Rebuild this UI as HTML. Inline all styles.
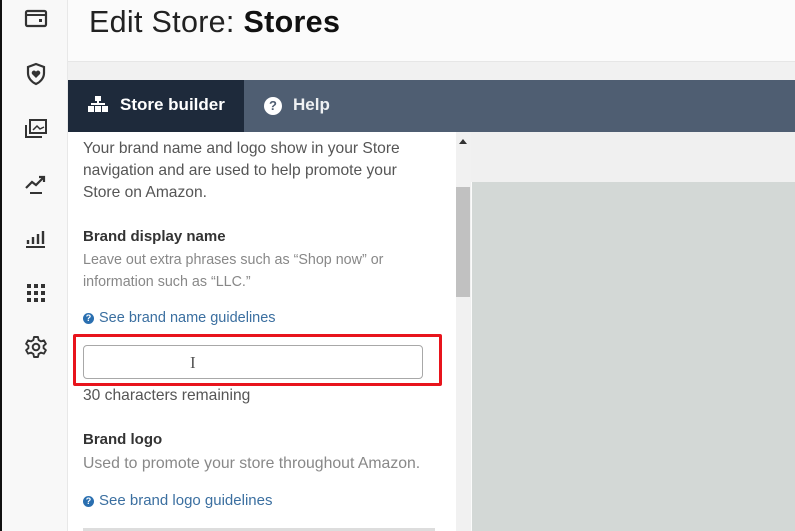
<!DOCTYPE html>
<html><head><meta charset="utf-8"><style>
*{margin:0;padding:0;box-sizing:border-box}
body{width:795px;height:531px;overflow:hidden;background:#fbfbfb;font-family:"Liberation Sans",sans-serif;position:relative}
.abs{position:absolute}
.side{left:0;top:0;width:68px;height:531px;background:#f8f8f8;border-left:2px solid #111;border-right:1px solid #e8e8e8}
.side svg{position:absolute;left:22px}
h1{position:absolute;left:89px;top:5px;font-size:30.5px;font-weight:normal;color:#222;letter-spacing:0.3px}
h1 b{font-weight:bold;color:#111}
.band{left:68px;top:61px;width:727px;height:19px;background:#f1f1f1;border-top:1px solid #e6e6e6}
.nav{left:68px;top:80px;width:727px;height:52px;background:#4f5e72}
.tab1{left:68px;top:80px;width:176px;height:52px;background:#1e2a3b;color:#fff;font-size:17px;font-weight:bold}
.tab2{left:264px;top:80px;height:52px;color:#eef0f2;font-size:17px;font-weight:bold}
.panel{left:68px;top:132px;width:388px;height:399px;background:#fff}
.p{position:absolute;left:83px;color:#555;font-size:15.6px;line-height:22px;white-space:nowrap}
.g{color:#888;font-size:14.3px;line-height:22px}
.hd{color:#333;font-weight:bold;font-size:15px}
.lk{color:#3b6fa0;font-size:14.5px}
.q{display:inline-block;width:11px;height:11px;border-radius:50%;background:#2a6fb0;color:#fff;font-size:9px;line-height:11px;text-align:center;font-weight:bold;vertical-align:1px;margin-right:5px}
</style></head><body>
<div class="abs side">
<svg style="top:8px" width="24" height="22" viewBox="0 0 24 22"><rect x="2" y="3" width="20" height="15" rx="1.5" fill="none" stroke="#333" stroke-width="2.2"/><line x1="2" y1="7" x2="22" y2="7" stroke="#333" stroke-width="2"/><rect x="15" y="11" width="3" height="3" fill="#333"/></svg>
<svg style="top:62px" width="24" height="24" viewBox="0 0 24 24"><path d="M12 2L4 5v6c0 5 3.5 9 8 11 4.5-2 8-6 8-11V5z" fill="none" stroke="#333" stroke-width="2.2"/><path d="M12 16l-4-4a2.2 2.2 0 0 1 4-2.3 2.2 2.2 0 0 1 4 2.3z" fill="#333"/></svg>
<svg style="top:117px" width="24" height="24" viewBox="0 0 24 24"><rect x="6" y="3" width="16" height="13" fill="none" stroke="#333" stroke-width="2"/><path d="M2 8v12h16" fill="none" stroke="#333" stroke-width="2"/><path d="M9 13l4-4 3 3 4-2" fill="none" stroke="#333" stroke-width="1.5"/></svg>
<svg style="top:172px" width="24" height="24" viewBox="0 0 24 24"><path d="M2 16l6-6 4 3 8-8M15 5h5v5" fill="none" stroke="#333" stroke-width="2.2"/><line x1="6" y1="21" x2="18" y2="21" stroke="#333" stroke-width="2"/></svg>
<svg style="top:226px" width="24" height="24" viewBox="0 0 24 24"><path d="M4 14v4M9 11v7M14 8v10M19 5v13" stroke="#333" stroke-width="2.4"/><line x1="2" y1="21" x2="21" y2="21" stroke="#333" stroke-width="2"/></svg>
<svg style="top:281px" width="24" height="24" viewBox="0 0 24 24"><g fill="#333"><rect x="3" y="3" width="4" height="4"/><rect x="10" y="3" width="4" height="4"/><rect x="17" y="3" width="4" height="4"/><rect x="3" y="10" width="4" height="4"/><rect x="10" y="10" width="4" height="4"/><rect x="17" y="10" width="4" height="4"/><rect x="3" y="17" width="4" height="4"/><rect x="10" y="17" width="4" height="4"/><rect x="17" y="17" width="4" height="4"/></g></svg>
<svg style="top:335px" width="24" height="24" viewBox="0 0 24 24"><path d="M10 2h4l.6 3 2.4 1.4 2.9-1 2 3.4-2.3 2v2.4l2.3 2-2 3.4-2.9-1L14.6 19 14 22h-4l-.6-3L7 17.6l-2.9 1-2-3.4 2.3-2v-2.4l-2.3-2 2-3.4 2.9 1L9.4 5z" fill="none" stroke="#333" stroke-width="1.9" stroke-linejoin="round"/><circle cx="12" cy="12" r="3.3" fill="none" stroke="#333" stroke-width="2"/></svg>
</div>
<h1>Edit Store: <b>Stores</b></h1>
<div class="abs band"></div>
<div class="abs nav"></div>
<div class="abs tab1"><svg class="abs" style="left:20px;top:16px" width="20" height="18" viewBox="0 0 20 18"><g fill="#fff"><rect x="7" y="0" width="6" height="5"/><rect x="9" y="5" width="2" height="3"/><rect x="3" y="7" width="14" height="2"/><rect x="0" y="10" width="6" height="6"/><rect x="7" y="10" width="6" height="6"/><rect x="14" y="10" width="6" height="6"/></g></svg><span class="abs" style="left:52px;top:15px">Store builder</span></div>
<div class="abs tab2"><span style="display:inline-block;width:18px;height:18px;border-radius:50%;background:#fff;color:#4f5e72;font-size:13px;line-height:18px;text-align:center;margin-top:17px;vertical-align:top">?</span><span style="display:inline-block;margin:15px 0 0 11px;vertical-align:top">Help</span></div>
<div class="abs panel"></div>
<div class="abs" style="left:456px;top:132px;width:15px;height:399px;background:#f1f1f1"></div>
<div class="abs" style="left:459px;top:139px;width:0;height:0;border-left:4px solid transparent;border-right:4px solid transparent;border-bottom:5px solid #333"></div>
<div class="abs" style="left:456px;top:187px;width:14px;height:110px;background:#c1c1c1"></div>
<div class="abs" style="left:471px;top:132px;width:324px;height:50px;background:#f0f0f0"></div>
<div class="abs" style="left:472px;top:182px;width:323px;height:349px;background:#d3d8d6"></div>
<div class="p" style="top:138px">Your brand name and logo show in your Store<br>navigation and are used to help promote your<br>Store on Amazon.</div>
<div class="p hd" style="top:226px">Brand display name</div>
<div class="p g" style="top:249px">Leave out extra phrases such as “Shop now” or<br>information such as “LLC.”</div>
<div class="p lk" style="top:307px"><span class="q">?</span>See brand name guidelines</div>
<div class="abs" style="left:73px;top:334px;width:369px;height:52px;border:3px solid #e8141c;border-radius:2px"></div>
<div class="abs" style="left:83px;top:345px;width:340px;height:34px;border:1.5px solid #a8a8a8;border-radius:4px;background:#fff"></div>
<div class="abs" style="left:190px;top:353px;font-size:17px;color:#555;font-family:'Liberation Serif',serif">I</div>
<div class="p" style="top:385px;color:#555">30 characters remaining</div>
<div class="p hd" style="top:429px">Brand logo</div>
<div class="p g" style="top:453px;font-size:15.8px">Used to promote your store throughout Amazon.</div>
<div class="p lk" style="top:490px;font-size:15px"><span class="q">?</span>See brand logo guidelines</div>
<div class="abs" style="left:83px;top:528px;width:352px;height:3px;background:#ddd"></div>
</body></html>
